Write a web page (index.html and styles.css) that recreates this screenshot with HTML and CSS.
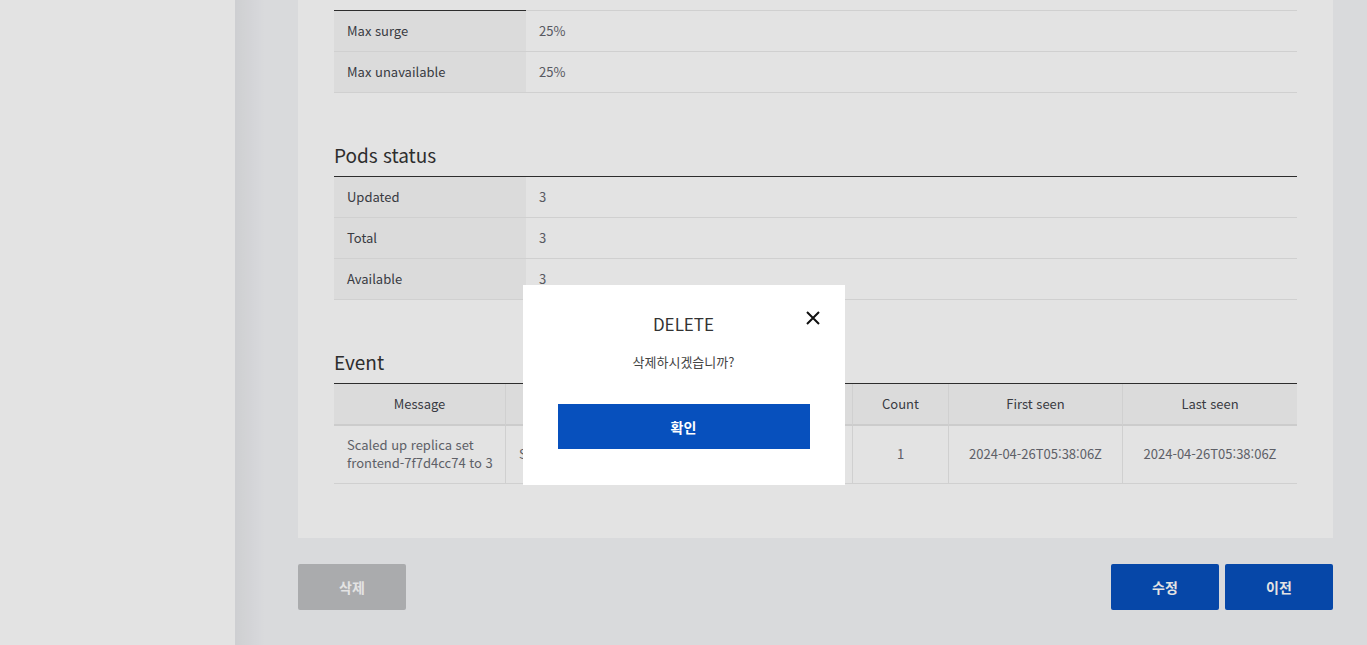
FILE: index.html
```html
<!DOCTYPE html>
<html lang="ko">
<head>
<meta charset="utf-8">
<title>Deployment detail</title>
<link rel="stylesheet" href="styles.css">
</head>
<body>
<div class="app">
  <aside class="sidebar"></aside>
  <main class="main">
    <section class="card">
      <table class="kv kv-first">
        <tr><th>Max surge</th><td>25%</td></tr>
        <tr><th>Max unavailable</th><td>25%</td></tr>
      </table>

      <h3 class="sec-title">Pods status</h3>
      <table class="kv">
        <tr><th>Updated</th><td>3</td></tr>
        <tr><th>Total</th><td>3</td></tr>
        <tr><th>Available</th><td>3</td></tr>
      </table>

      <h3 class="sec-title">Event</h3>
      <table class="grid">
        <colgroup>
          <col class="c-msg"><col class="c-reason"><col class="c-type"><col class="c-count"><col class="c-date"><col class="c-date">
        </colgroup>
        <thead>
          <tr><th>Message</th><th>Reason</th><th>Type</th><th>Count</th><th>First seen</th><th>Last seen</th></tr>
        </thead>
        <tbody>
          <tr>
            <td class="left"><span class="line">Scaled up replica set</span><br><span class="line">frontend-7f7d4cc74 to 3</span></td>
            <td class="left">ScalingReplicaSet</td>
            <td>Normal</td>
            <td>1</td>
            <td>2024-04-26T05:38:06Z</td>
            <td>2024-04-26T05:38:06Z</td>
          </tr>
        </tbody>
      </table>
    </section>

    <div class="actions">
      <button class="btn btn-gray">삭제</button>
      <div class="actions-right">
        <button class="btn btn-blue">수정</button>
        <button class="btn btn-blue">이전</button>
      </div>
    </div>
  </main>
</div>

<div class="overlay">
  <div class="modal">
    <button class="modal-close" aria-label="close">
      <svg width="14" height="14" viewBox="0 0 14 14"><path d="M1 1L13 13M13 1L1 13" stroke="#111" stroke-width="2" fill="none"/></svg>
    </button>
    <h2 class="modal-title">DELETE</h2>
    <p class="modal-msg">삭제하시겠습니까?</p>
    <button class="modal-btn">확인</button>
  </div>
</div>
</body>
</html>
```

FILE: styles.css
```css
* { box-sizing: border-box; }
html, body { margin: 0; padding: 0; }
body {
  font-family: "Noto Sans CJK KR", "Noto Sans", sans-serif;
  font-size: 13px;
  color: #444;
  overflow: hidden;
}
.app {
  display: flex;
  height: 645px;
}
.sidebar {
  width: 235px;
  flex: 0 0 235px;
  background: #fff;
}
.main {
  flex: 1;
  padding: 0 34px 0 63px;
  background: linear-gradient(to right, rgba(0,0,0,0.05), rgba(0,0,0,0) 30px), #f4f5f8;
}
.card {
  background: #fff;
  padding: 10px 36px 54px;
}
table {
  width: 100%;
  border-collapse: separate;
  border-spacing: 0;
}
.kv { border-top: 1px solid #333; }
.kv th, .kv td {
  padding: 10px 13px;
  line-height: 20px;
  font-size: 13px;
  text-align: left;
  font-weight: normal;
  border-bottom: 1px solid #eaeaea;
}
.kv th {
  width: 192px;
  background: #f7f7f7;
  color: #41434a;
}
.kv td { color: #63656d; }
.kv-first { border-top: 0; }
.kv-first tr:first-child th { border-top: 1px solid #333; }
.kv-first tr:first-child td { border-top: 1px solid #eaeaea; }

.sec-title {
  margin: 48px 0 7px;
  font-size: 19px;
  line-height: 28px;
  font-weight: normal;
  color: #333;
}

.grid {
  table-layout: fixed;
  border-top: 1px solid #333;
}
.c-msg { width: 172px; }
.c-reason { width: 194px; }
.c-type { width: 153px; }
.c-count { width: 96px; }
.c-date { width: 174px; }
.grid th, .grid td {
  text-align: center;
  border-right: 1px solid #eaeaea;
  font-size: 13px;
}
.grid th:last-child, .grid td:last-child { border-right: 0; }
.grid th {
  background: #f7f7f7;
  padding: 10px;
  line-height: 20px;
  font-weight: normal;
  color: #41434a;
  border-bottom: 2px solid #e6e6e6;
}
.grid td {
  padding: 10px 13px 11px;
  line-height: 18px;
  color: #6a6c74;
  border-bottom: 1px solid #eaeaea;
}
.grid td.left { text-align: left; }
.line { white-space: nowrap; }

.actions {
  margin-top: 26px;
  display: flex;
  justify-content: space-between;
}
.actions-right { display: flex; gap: 6px; }
.btn {
  width: 108px;
  height: 46px;
  border: 0;
  border-radius: 2px;
  font-family: inherit;
  font-size: 14px;
  font-weight: bold;
  color: #fff;
}
.btn-gray { background: #bfc0c3; }
.btn-blue { background: #0750bd; }

.overlay {
  position: fixed;
  inset: 0;
  background: rgba(0,0,0,0.11);
  display: flex;
  justify-content: center;
  align-items: flex-start;
  padding-top: 285px;
}
.modal {
  position: relative;
  width: 322px;
  background: #fff;
  padding: 27px 35px 36px;
  text-align: center;
}
.modal-close {
  position: absolute;
  top: 26px;
  right: 25px;
  width: 14px;
  height: 14px;
  padding: 0;
  border: 0;
  background: none;
  display: block;
}
.modal-close svg { display: block; }
.modal-title {
  margin: 0;
  font-size: 17px;
  line-height: 24px;
  font-weight: normal;
  color: #333;
}
.modal-msg {
  margin: 16px 0 0;
  font-size: 13px;
  line-height: 20px;
  color: #444;
}
.modal-btn {
  margin-top: 32px;
  width: 100%;
  height: 45px;
  border: 0;
  background: #0750bd;
  color: #fff;
  font-family: inherit;
  font-size: 14px;
  font-weight: bold;
  display: block;
}
```
